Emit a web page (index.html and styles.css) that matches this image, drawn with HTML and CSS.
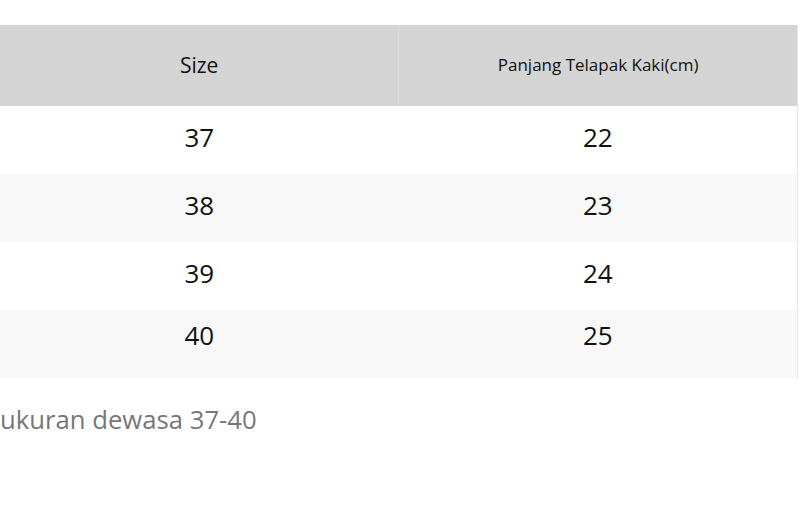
FILE: index.html
```html
<!DOCTYPE html>
<html>
<head>
<meta charset="utf-8">
<link rel="stylesheet" href="styles.css">
</head>
<body>
<div class="page">
  <table class="size-table">
    <thead>
      <tr class="head-row">
        <th class="col-size">Size</th>
        <th class="col-len">Panjang Telapak Kaki(cm)</th>
      </tr>
    </thead>
    <tbody>
      <tr class="body-row"><td>37</td><td>22</td></tr>
      <tr class="body-row alt"><td>38</td><td>23</td></tr>
      <tr class="body-row"><td>39</td><td>24</td></tr>
      <tr class="body-row alt last"><td>40</td><td>25</td></tr>
    </tbody>
  </table>
  <p class="note">ukuran dewasa 37-40</p>
</div>
</body>
</html>
```

FILE: styles.css
```css
html, body {
  margin: 0;
  padding: 0;
  background: #ffffff;
}
body {
  font-family: "Open Sans", "Noto Sans", sans-serif;
  color: #111;
}
.page {
  padding-top: 25px;
  width: 800px;
  overflow: hidden;
}
.size-table {
  width: 798px;
  border-collapse: collapse;
  table-layout: fixed;
  border-right: 1px solid #e6e6e6;
}
.head-row {
  height: 81px;
}
.size-table th {
  background: #d4d4d4;
  padding: 0 0 2px 0;
  font-weight: 400;
  text-align: center;
  vertical-align: middle;
  color: #111;
}
.size-table th.col-size {
  font-size: 21px;
  border-right: 1px solid #dcdcdc;
}
.size-table th.col-len {
  font-size: 17px;
}
.body-row {
  height: 68px;
}
.size-table td {
  padding: 0 0 6px 0;
  text-align: center;
  vertical-align: middle;
  font-size: 26px;
  color: #111;
}
.size-table tr.last td {
  padding-bottom: 19px;
}
.size-table tr.alt td {
  background: #f8f8f8;
}
.note {
  margin: 25px 0 0 0;
  font-size: 25.7px;
  line-height: 34px;
  color: #777;
}
```
